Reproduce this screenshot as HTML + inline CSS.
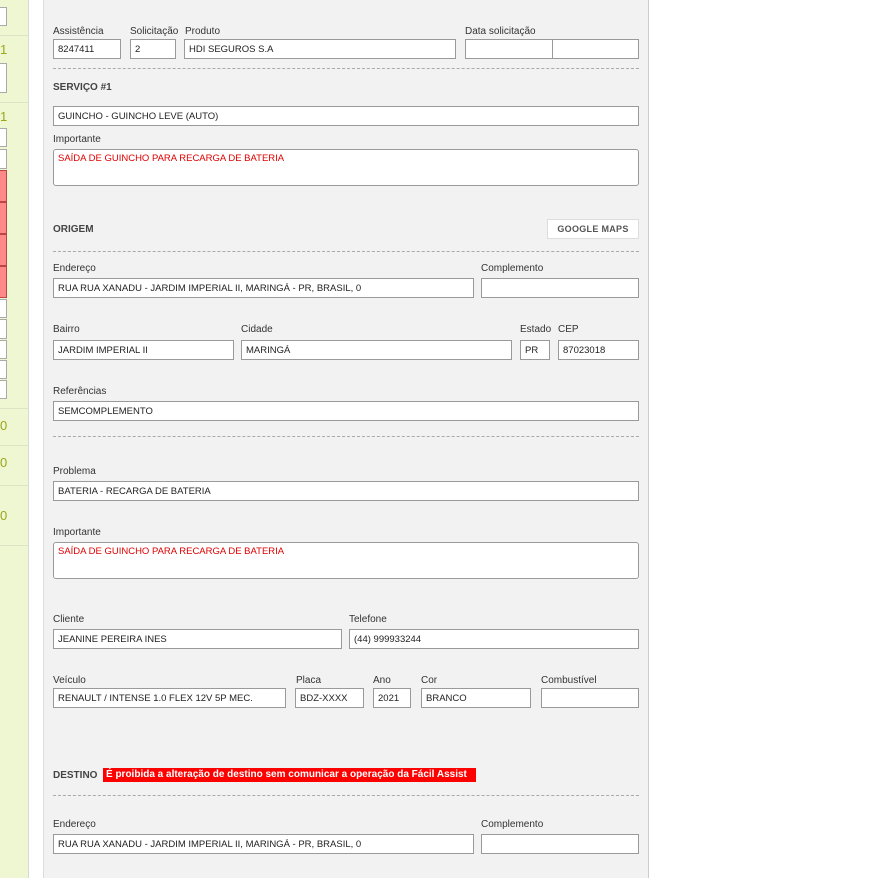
<!DOCTYPE html>
<html><head><meta charset="utf-8"><style>
*{box-sizing:border-box;margin:0;padding:0}
body{width:878px;height:878px;overflow:hidden;background:#fff;font-family:"Liberation Sans",sans-serif;font-size:10px;color:#333;position:relative}
.a{position:absolute}
.side{left:0;top:0;width:29px;height:878px;background:#eff7d2;border-right:1px solid #d8d8d8}
.panel{left:43px;top:0;width:606px;height:878px;background:#f2f2f2;border-left:1px solid #ddd;border-right:1px solid #ccc}
.l{position:absolute;font-size:10px;color:#333;white-space:nowrap}
.i{position:absolute;height:20px;background:#fff;border:1px solid #9a9a9a;font-size:9.5px;padding:4px 0 0 4px;color:#222;white-space:nowrap;overflow:hidden}
.t{position:absolute;height:37px;background:#fff;border:1px solid #9a9a9a;border-radius:3px;font-size:9.5px;padding:3px 0 0 4px;color:#e00000}
.d{position:absolute;left:53px;width:586px;border-top:1px dashed #aaa}
.h{position:absolute;font-weight:bold;font-size:10px;color:#444}
.n{position:absolute;left:0;color:#9aa51a;font-size:13px}
.si{position:absolute;left:0;width:7px;background:#fff;border:1px solid #aaa;border-left:none}
.sr{position:absolute;left:0;width:7px;background:#f88;border:1px solid #b44;border-left:none}
.sl{position:absolute;left:0;width:29px;border-top:1px solid #dde3c5}
</style></head><body>
<div class="a side"></div>
<div class="si" style="top:7px;height:19px"></div>
<div class="sl" style="top:35px"></div>
<div class="n" style="top:42px">1</div>
<div class="si" style="top:63px;height:30px"></div>
<div class="sl" style="top:102px"></div>
<div class="n" style="top:109px">1</div>
<div class="si" style="top:128px;height:19px"></div>
<div class="si" style="top:149px;height:20px"></div>
<div class="sr" style="top:170px;height:32px"></div>
<div class="sr" style="top:202px;height:32px"></div>
<div class="sr" style="top:234px;height:32px"></div>
<div class="sr" style="top:266px;height:32px"></div>
<div class="si" style="top:299px;height:19px"></div>
<div class="si" style="top:319px;height:20px"></div>
<div class="si" style="top:340px;height:19px"></div>
<div class="si" style="top:360px;height:19px"></div>
<div class="si" style="top:380px;height:19px"></div>
<div class="sl" style="top:408px"></div>
<div class="n" style="top:418px">0</div>
<div class="sl" style="top:445px"></div>
<div class="n" style="top:455px">0</div>
<div class="sl" style="top:485px"></div>
<div class="n" style="top:508px">0</div>
<div class="sl" style="top:545px"></div>

<div class="a panel"></div>

<div class="l" style="left:53px;top:26px">Assistência</div>
<div class="l" style="left:130px;top:26px">Solicitação</div>
<div class="l" style="left:185px;top:26px">Produto</div>
<div class="l" style="left:465px;top:26px">Data solicitação</div>
<div class="i" style="left:53px;top:39px;width:68px">8247411</div>
<div class="i" style="left:130px;top:39px;width:46px">2</div>
<div class="i" style="left:184px;top:39px;width:272px">HDI SEGUROS S.A</div>
<div class="i" style="left:465px;top:39px;width:88px"></div>
<div class="i" style="left:552px;top:39px;width:87px"></div>
<div class="d" style="top:68px"></div>
<div class="h" style="left:53px;top:82px">SERVIÇO #1</div>
<div class="i" style="left:53px;top:106px;width:586px">GUINCHO - GUINCHO LEVE (AUTO)</div>
<div class="l" style="left:53px;top:134px">Importante</div>
<div class="t" style="left:53px;top:149px;width:586px">SAÍDA DE GUINCHO PARA RECARGA DE BATERIA</div>

<div class="h" style="left:53px;top:224px">ORIGEM</div>
<div class="a" style="left:547px;top:219px;width:92px;height:20px;background:#fff;border:1px solid #ddd;font-weight:bold;font-size:9px;color:#555;text-align:center;line-height:18px;letter-spacing:.3px">GOOGLE MAPS</div>
<div class="d" style="top:251px"></div>
<div class="l" style="left:53px;top:263px">Endereço</div>
<div class="l" style="left:481px;top:263px">Complemento</div>
<div class="i" style="left:53px;top:278px;width:421px">RUA RUA XANADU - JARDIM IMPERIAL II, MARINGÁ - PR, BRASIL, 0</div>
<div class="i" style="left:481px;top:278px;width:158px"></div>
<div class="l" style="left:53px;top:324px">Bairro</div>
<div class="l" style="left:241px;top:324px">Cidade</div>
<div class="l" style="left:520px;top:324px">Estado</div>
<div class="l" style="left:558px;top:324px">CEP</div>
<div class="i" style="left:53px;top:340px;width:181px">JARDIM IMPERIAL II</div>
<div class="i" style="left:241px;top:340px;width:271px">MARINGÁ</div>
<div class="i" style="left:520px;top:340px;width:30px">PR</div>
<div class="i" style="left:558px;top:340px;width:81px">87023018</div>
<div class="l" style="left:53px;top:386px">Referências</div>
<div class="i" style="left:53px;top:401px;width:586px">SEMCOMPLEMENTO</div>
<div class="d" style="top:436px"></div>
<div class="l" style="left:53px;top:466px">Problema</div>
<div class="i" style="left:53px;top:481px;width:586px">BATERIA - RECARGA DE BATERIA</div>
<div class="l" style="left:53px;top:527px">Importante</div>
<div class="t" style="left:53px;top:542px;width:586px">SAÍDA DE GUINCHO PARA RECARGA DE BATERIA</div>
<div class="l" style="left:53px;top:614px">Cliente</div>
<div class="l" style="left:349px;top:614px">Telefone</div>
<div class="i" style="left:53px;top:629px;width:289px">JEANINE PEREIRA INES</div>
<div class="i" style="left:349px;top:629px;width:290px">(44) 999933244</div>
<div class="l" style="left:53px;top:675px">Veículo</div>
<div class="l" style="left:296px;top:675px">Placa</div>
<div class="l" style="left:373px;top:675px">Ano</div>
<div class="l" style="left:421px;top:675px">Cor</div>
<div class="l" style="left:541px;top:675px">Combustível</div>
<div class="i" style="left:53px;top:688px;width:233px">RENAULT / INTENSE 1.0 FLEX 12V 5P MEC.</div>
<div class="i" style="left:295px;top:688px;width:69px">BDZ-XXXX</div>
<div class="i" style="left:373px;top:688px;width:38px">2021</div>
<div class="i" style="left:421px;top:688px;width:110px">BRANCO</div>
<div class="i" style="left:541px;top:688px;width:98px"></div>
<div class="h" style="left:53px;top:770px">DESTINO</div>
<div class="a" style="left:103px;top:768px;width:373px;height:14px;background:#f00;color:#fff;font-weight:bold;font-size:10px;line-height:14px;padding-left:3px;white-space:nowrap;overflow:hidden">É proibida a alteração de destino sem comunicar a operação da Fácil Assist</div>
<div class="d" style="top:795px"></div>
<div class="l" style="left:53px;top:819px">Endereço</div>
<div class="l" style="left:481px;top:819px">Complemento</div>
<div class="i" style="left:53px;top:834px;width:421px">RUA RUA XANADU - JARDIM IMPERIAL II, MARINGÁ - PR, BRASIL, 0</div>
<div class="i" style="left:481px;top:834px;width:158px"></div>
</body></html>
